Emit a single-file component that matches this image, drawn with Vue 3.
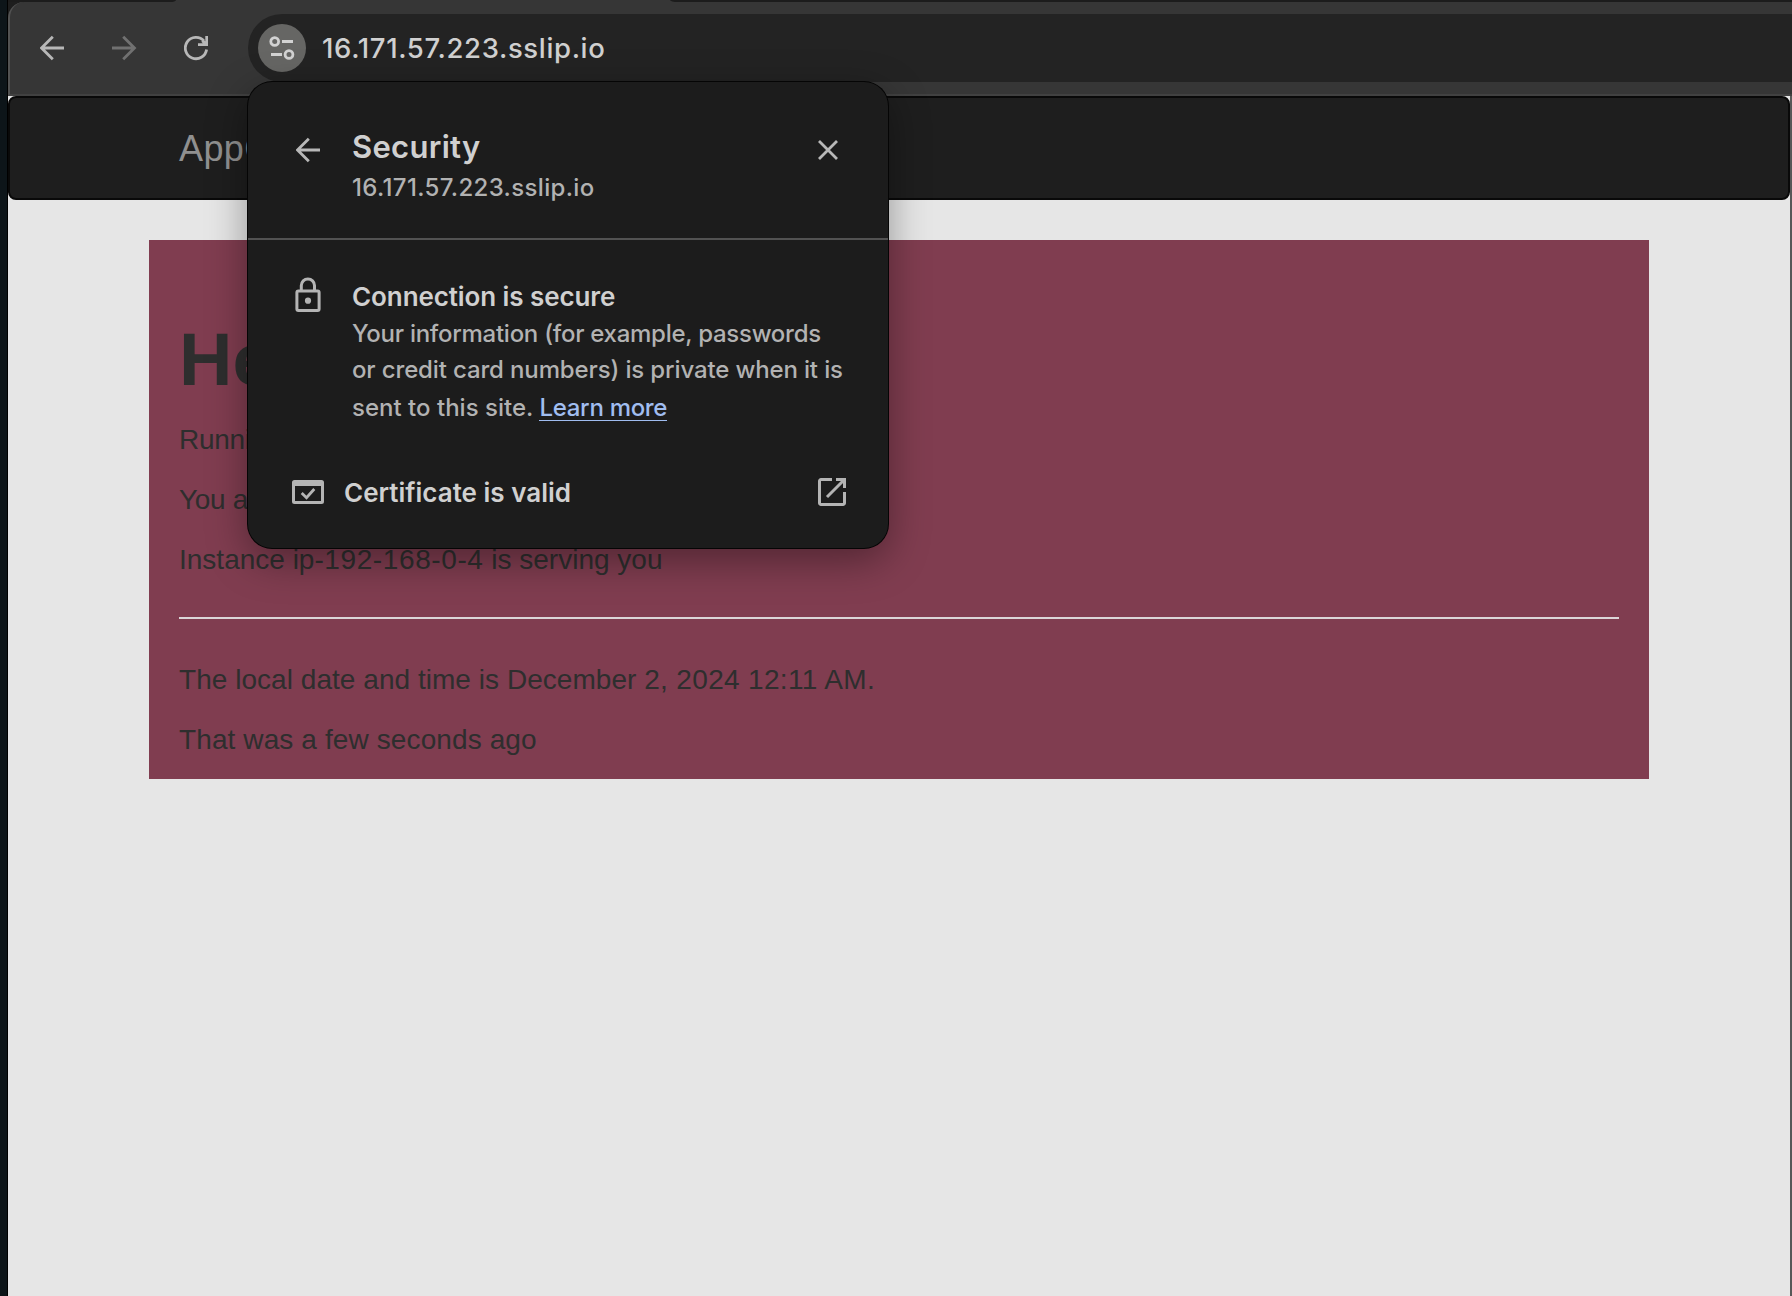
<script setup>
const bodyLines = [
  { text: 'Your information (for example, passwords', cls: 'l1' },
  { text: 'or credit card numbers) is private when it is', cls: 'l2' },
]
</script>

<template>
  <div class="screen">
    <div class="desktop-edge"></div>
    <div class="window">
      <div class="tabstrip"><i class="gap-left"></i><i class="active-tab"></i><i class="gap-right"></i></div>
      <header class="toolbar">
        <svg class="ico" width="26" height="26" viewBox="0 0 26 26"><path d="M24 13H2M12.800 1.700L1.500 13l11.300 11.300" /></svg>
        <svg class="ico forward" width="26" height="26" viewBox="0 0 26 26"><path d="M0 13h22M11.200 1.700L22.500 13 11.200 24.300" /></svg>
        <svg class="ico reload" width="26" height="26" viewBox="0 0 26 26">
          <path d="M22.600 14.500A10.700 10.700 0 1 1 20 5.900" />
          <path class="reload-head" d="M21.300 1H24v10H14V8.300h4.800l-1.500-1.500 2-2 2 1.500z" />
        </svg>
        <div class="omnibox">
          <div class="site-chip">
            <svg width="26" height="24" viewBox="0 0 26 24" fill="none" stroke="#d2d2d2" stroke-width="2.800">
              <circle cx="5.700" cy="5.500" r="3.900" /><path d="M13 5.500h11M2 18.500h11" /><circle cx="20" cy="18.500" r="3.900" />
            </svg>
          </div>
          <span class="address">16.171.57.223.sslip.io</span>
        </div>
      </header>
      <main class="page">
        <nav class="navbar"><span>AppC</span></nav>
        <section class="card">
          <h1>Hello</h1>
          <p class="running">Running</p>
          <p class="running">You a</p>
          <p>Instance ip<span class="host-number">-192-168-0-4</span> is serving you</p>
          <hr />
          <p class="date">The local date and time is December <span class="date-number">2, 2024 12:11 AM.</span></p>
          <p class="ago">That was a few seconds ago</p>
        </section>
      </main>
    </div>
    <i class="window-edge"></i>

    <aside class="popup">
      <div class="popup-head">
        <svg class="ico back" width="26" height="26" viewBox="0 0 26 26"><path d="M24 13H2M12.800 1.700L1.500 13l11.300 11.300" /></svg>
        <div class="titles">
          <div class="title">Security</div>
          <div class="host">16.171.57.223.sslip.io</div>
        </div>
        <svg class="ico close" width="20" height="20" viewBox="0 0 20 20"><path d="M1 1l18 18M19 1L1 19" /></svg>
      </div>
      <div class="connection">
        <svg class="lock" width="26" height="36" viewBox="0 0 26 36">
          <path d="M6.300 13V8.500a6.600 6.600 0 0 1 13.200 0V13" fill="none" stroke="#b4b4b4" stroke-width="3" />
          <rect x="1.900" y="13.900" width="22.200" height="19.600" rx="1.500" fill="none" stroke="#b4b4b4" stroke-width="3" />
          <circle cx="13" cy="23.700" r="3.100" fill="#b4b4b4" />
        </svg>
        <div class="copy">
          <div class="strong">Connection is secure</div>
          <div v-for="line in bodyLines" :key="line.cls" class="line" :class="line.cls">{{ line.text }}</div>
          <div class="line l3">sent to this site. <a>Learn more</a></div>
        </div>
      </div>
      <div class="certificate">
        <svg width="32" height="24" viewBox="0 0 32 24">
          <path fill="#b4b4b4" fill-rule="evenodd" d="M2.500 0h27A2.500 2.500 0 0 1 32 2.500v19a2.500 2.500 0 0 1-2.500 2.500h-27A2.500 2.500 0 0 1 0 21.500v-19A2.500 2.500 0 0 1 2.500 0zM3 6v15h26V6z" />
          <path d="M9.700 13l4.800 4.700L22.300 9" fill="none" stroke="#b4b4b4" stroke-width="2.800" />
        </svg>
        <span class="cert-label">Certificate is valid</span>
        <svg class="launch" width="28" height="28" viewBox="0 0 28 28" fill="none" stroke="#b4b4b4" stroke-width="3">
          <path d="M14 1.500H3A1.500 1.500 0 0 0 1.500 3v22A1.500 1.500 0 0 0 3 26.500h22a1.500 1.500 0 0 0 1.500-1.500V14" /><path d="M18 1.500h8.500V10M26 2L9 19" />
        </svg>
      </div>
    </aside>
  </div>
</template>

<style>
body { margin: 0; background: #e6e6e6; overflow: hidden; }
</style>

<style scoped>
.screen { position: relative; display: flex; width: 1792px; height: 1296px; overflow: hidden; background: #1e1e1e; font-family: "Liberation Sans", Arial, sans-serif; white-space: nowrap; }
.desktop-edge { box-sizing: border-box; width: 8px; background: #0d1519; border-right: 1px solid #000; }
.window { display: flex; flex-direction: column; width: 1784px; }
.tabstrip { display: flex; height: 2px; background: #363636; }
.gap-left { width: 168px; background: #1c1c1c; border-bottom-right-radius: 6px 2px; }
.active-tab { flex: 0 0 494px; }
.gap-right { flex: 1; background: #1c1c1c; border-bottom-left-radius: 8px 2px; }
.toolbar { box-sizing: border-box; display: flex; align-items: center; height: 94px; padding: 0 0 0 30px; background: #363636; border-left: 2px solid #525252; border-bottom: 2px solid #414141; border-top-left-radius: 16px; }
.ico { flex: none; fill: none; stroke: #b8b8b8; stroke-width: 2.800; }
.forward { margin-left: 46px; stroke: #717171; }
.reload { margin-left: 46px; }
.reload-head { fill: #b8b8b8; stroke: none; }
.omnibox { display: flex; align-items: center; flex: 1; height: 68px; margin-left: 38px; background: #232323; border-radius: 34px 0 0 34px; }
.site-chip { display: flex; align-items: center; justify-content: center; width: 48px; height: 48px; margin-left: 10px; border-radius: 50%; background: #666664; }
.address { margin-left: 16px; font: 500 27.500px/36px Inter, sans-serif; letter-spacing: .65px; color: #d0d0d0; }
.page { flex: 1; background: #e6e6e6; }
.navbar { box-sizing: border-box; width: 1782px; height: 104px; padding-left: 169px; border: 2px solid #090909; border-radius: 8px; background: #1e1e1e; color: #909090; font-size: 36px; line-height: 102px; letter-spacing: .4px; }
.card { box-sizing: border-box; width: 1500px; height: 539px; margin: 40px 0 0 141px; padding: 80px 30px 0; background: #803d50; color: #2e2e2e; font-size: 28px; }
h1 { margin: 0 0 20px; font-size: 74px; line-height: 80px; font-weight: 700; }
p { margin: 0 0 20px; line-height: 40px; }
.running { letter-spacing: -.3px; }
.host-number { letter-spacing: .6px; }
.date { letter-spacing: .04px; }
.date-number { letter-spacing: .33px; }
.ago { letter-spacing: .11px; }
hr { margin: 37px 0 41px; height: 2px; border: 0; background: #dcd6d8; }
.window-edge { position: absolute; right: 0; top: 96px; bottom: 0; width: 2px; background: #585858; }

.popup { position: absolute; left: 248px; top: 82px; width: 640px; height: 466px; border-radius: 24px; background: #1c1c1c; box-shadow: 0 0 0 1px #050505, 0 12px 40px rgba(0, 0, 0, .38); font-family: Inter, sans-serif; }
.popup-head { box-sizing: border-box; display: flex; height: 158px; padding: 44px 50px 0 48px; border-bottom: 2px solid #525252; }
.back { margin-top: 11px; }
.titles { flex: 1; margin-left: 30px; }
.title { font-size: 31px; line-height: 42px; font-weight: 600; letter-spacing: .3px; color: #d0d0d0; }
.host { margin-top: 1px; font-size: 24px; line-height: 37px; letter-spacing: .35px; color: #b2b2b2; font-weight: 450; }
.close { margin-top: 14px; }
.connection { display: flex; align-items: flex-start; padding: 37px 0 0 47px; }
.lock { flex: none; }
.copy { margin: 1px 0 0 31px; color: #b2b2b2; }
.strong { font-size: 26px; line-height: 38px; font-weight: 600; letter-spacing: -.09px; color: #d0d0d0; }
.line { font-size: 24px; line-height: 36px; font-weight: 450; }
.l1 { letter-spacing: -.27px; }
.l2 { letter-spacing: -.14px; }
.l3 { height: 40px; line-height: 40px; letter-spacing: .01px; }
.line a { display: inline-block; line-height: 25px; letter-spacing: -.3px; color: #a0bdf0; border-bottom: 1px solid #a0bdf0; }
.certificate { display: flex; align-items: center; padding: 44px 42px 0 44px; }
.cert-label { margin-left: 20px; font-size: 26px; line-height: 38px; padding-top: 2px; font-weight: 600; color: #d0d0d0; }
.launch { margin-left: auto; }
</style>
